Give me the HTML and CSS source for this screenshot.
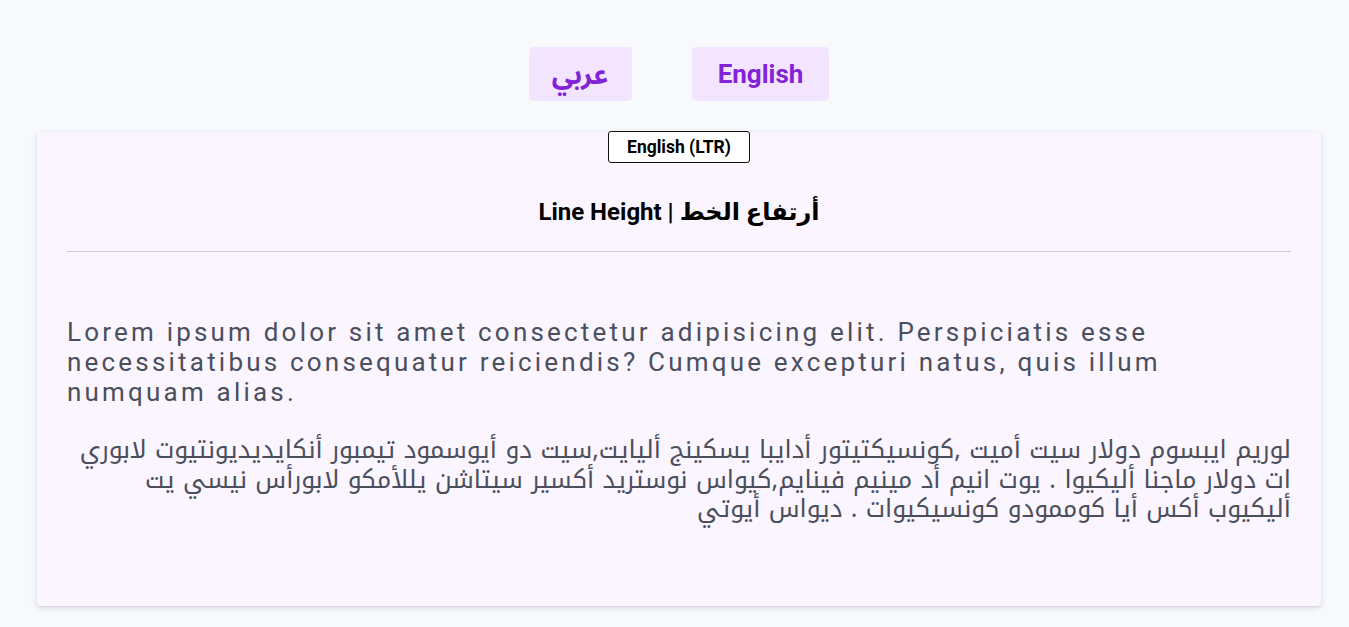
FILE: index.html
```html
<!DOCTYPE html>
<html lang="en">
<head>
<meta charset="utf-8">
<title>Line Height</title>
<link rel="stylesheet" href="styles.css">
</head>
<body>
<div class="page">
  <nav class="langs">
    <button class="lang-btn lang-ar" type="button">عربي</button>
    <button class="lang-btn lang-en" type="button">English</button>
  </nav>
  <section class="card">
    <div class="badge-row"><span class="badge">English (LTR)</span></div>
    <h1 class="title">Line Height | أرتفاع الخط</h1>
    <hr class="divider">
    <div class="content">
      <p class="text-en">Lorem ipsum dolor sit amet consectetur adipisicing elit. Perspiciatis esse necessitatibus consequatur reiciendis? Cumque excepturi natus, quis illum numquam alias.</p>
      <p class="text-ar" dir="rtl">لوريم ايبسوم دولار سيت أميت ,كونسيكتيتور أدايبا يسكينج أليايت,سيت دو أيوسمود تيمبور أنكايديديونتيوت لابوري ات دولار ماجنا أليكيوا . يوت انيم أد مينيم فينايم,كيواس نوستريد أكسير سيتاشن يللأمكو لابورأس نيسي يت أليكيوب أكس أيا كوممودو كونسيكيوات . ديواس أيوتي</p>
    </div>
  </section>
</div>
</body>
</html>
```
FILE: styles.css
```css
* { box-sizing: border-box; }
html, body { margin: 0; padding: 0; }
body {
  background: #f8f9fc;
  font-family: Roboto, "Noto Sans Arabic", "DejaVu Sans", sans-serif;
  color: #000;
}
.page {
  padding: 47px 28px 22px 37px;
}
.langs {
  display: flex;
  justify-content: center;
  gap: 60px;
  margin-bottom: 31px;
}
.lang-btn {
  border: none;
  background: #f3e5ff;
  color: #8224d6;
  font-family: Roboto, "Noto Sans Arabic", "DejaVu Sans", sans-serif;
  font-weight: 700;
  font-size: 26px;
  height: 54px;
  border-radius: 4px;
  cursor: pointer;
}
.lang-ar { width: 103px; padding: 0; font-size: 27px; }
.lang-en { padding: 0 26px; }
.card {
  background: #faf5ff;
  border-radius: 4px;
  box-shadow: 0 2px 6px rgba(0,0,0,0.12), 0 1px 2px rgba(0,0,0,0.06);
  padding: 0 30px 82px;
}
.badge-row {
  display: flex;
  justify-content: center;
}
.badge {
  display: inline-block;
  margin-top: -1px;
  border: 1px solid #111;
  border-radius: 3px;
  background: #fff;
  font-weight: 700;
  font-size: 17.5px;
  line-height: 30px;
  padding: 0 18px;
}
.title {
  text-align: center;
  font-family: Roboto, "DejaVu Sans", sans-serif;
  font-size: 24px;
  font-weight: 700;
  margin: 31px 0 0;
  line-height: 36px;
}
.divider {
  border: none;
  border-top: 1px solid #cfcbd6;
  margin: 21px 0 0;
}
.content {
  padding-top: 65px;
}
.text-en {
  margin: 0;
  font-size: 26px;
  line-height: 30px;
  letter-spacing: 3.2px;
  color: #4b4f5c;
}
.text-ar {
  margin: 28px 0 0;
  font-family: "Noto Kufi Arabic", "Noto Sans Arabic", "Droid Arabic Kufi", "DejaVu Sans", sans-serif;
  font-size: 24.8px;
  line-height: 29.5px;
  letter-spacing: 3.2px;
  color: #4b4f5c;
  text-align: right;
}
```
